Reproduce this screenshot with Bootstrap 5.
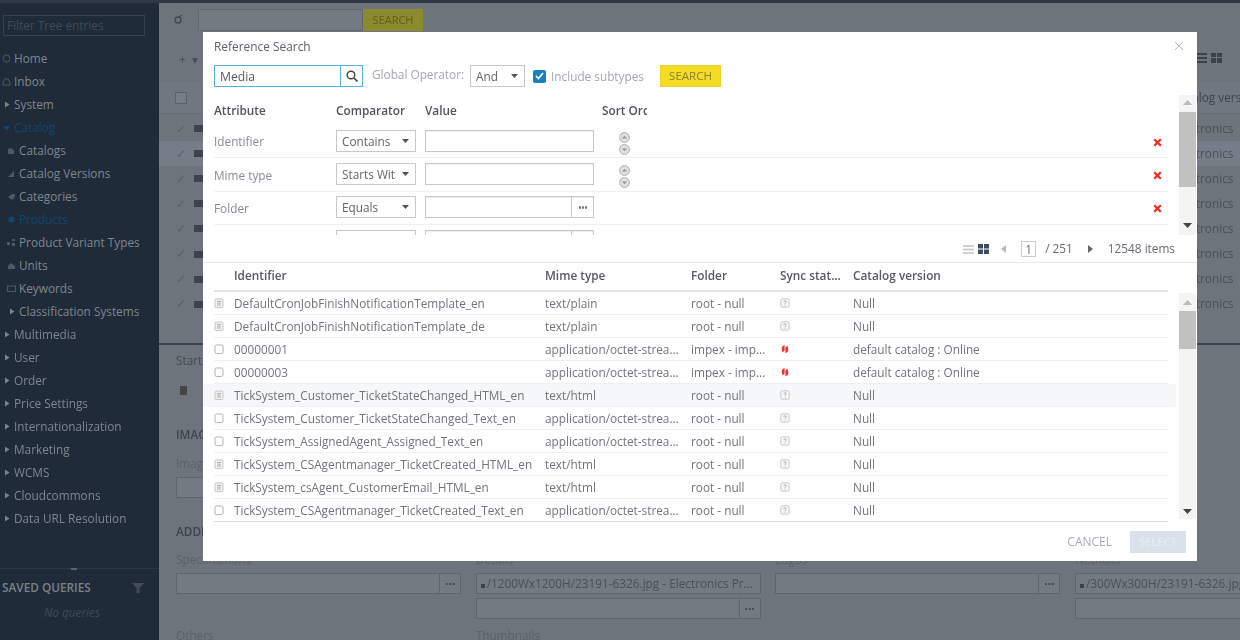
<!DOCTYPE html>
<html lang="en"><head><meta charset="utf-8"><title>Reference Search</title>
<link rel="stylesheet" href="https://cdn.jsdelivr.net/npm/bootstrap@5.3.0/dist/css/bootstrap.min.css">
<style>
html,body{height:100%;overflow:hidden}
body{font-family:"Open Sans","Liberation Sans",sans-serif;font-size:11.8px;background:#6e747c;color:#6d7278}
.shell{height:640px;width:1240px;position:relative;overflow:hidden;border-top:3px solid #2f3a46}
.dimmed{filter:blur(.7px);height:637px}
.side{width:159px;background:#1f2b38;color:#7f868e;flex:none;height:637px}
.tree-filter{margin:12px 14px 0 3px;height:21px;border:1px solid #36434f;color:#3f4b57;padding:1px 3px;font-size:11.8px;line-height:17px}
.tree{margin-top:10.500px;list-style:none;padding:0;font-size:11.8px}
.tree li{height:23px;line-height:23px;display:flex;align-items:center;white-space:nowrap;padding-left:14px;position:relative}
.tree li.kid{padding-left:19px}
.tree li.on{color:#12466f}
.tree svg{position:absolute;left:2px;top:7px;width:9px;height:9px}
.tree li.kid svg{left:7px}
.side-foot{margin-top:auto;border-top:1px solid #2a3744;height:72px;position:relative;padding:10px 2px 0}
.side-foot .grip{position:absolute;left:71px;top:-1px;width:6px;height:2px;background:#5a6570}
.sq{font-weight:600;color:#7a8189}
.nq{font-style:italic;color:#3f4b57;text-align:center;margin-top:7px;padding-right:15px}
.funnel{position:absolute;right:15px;top:14px;width:12px;height:10px}
.work{flex:1;min-width:0}
.w-top{height:37px;padding:6px 0 0 15px}
.w-in{height:22px;width:165px;background:#747a82;border:1px solid #62686f}
.w-btn{height:22px;width:60px;background:#8b8a2e;color:#5f5f18;text-align:center;line-height:22px;font-size:11px}
.tag{margin:5px 15px 0 0}
.w-tools{height:42px;padding:11px 0 0 20px;color:#4a5058}
.w-grid{margin-top:2px;padding-right:18px}
.w-head{height:32px;background:#717780;padding-left:16px;border-bottom:1px solid #666c74;color:#3f454d;white-space:nowrap}
.w-row{height:25.100px;padding-left:17px;white-space:nowrap;color:#4b5159}
.w-row.hi{background:#767d88}
.w-ver{width:66px;overflow:hidden;flex:none}
.w-box{width:12px;height:12px;border:1px solid #5b6169;background:#777d85;flex:none}
.w-tick{width:12px;color:#5b6169;flex:none}
.w-thumb{width:11px;height:7px;background:#3d434b;margin-left:6px}
.w-list{height:229px;padding-top:2px;overflow:hidden}
.w-detail{height:295px;border-top:2px solid #3a444f;padding:7px 0 0 17px;color:#454b53}
.w-line{line-height:16px}
.dash{width:7px;height:10px;margin:17px 0 17px 4px;display:block}
.fade{color:#5d636b;line-height:14px}
.strong1{font-weight:600;color:#3f454d;line-height:16px}
.gap-l{color:#5b6169;margin-top:13px;line-height:16px}
.add-h{margin-top:25px}
.spec-l{margin-top:12px}
.oth-l{margin-top:8px}
.img-f{margin-top:6px}
.fld-row{margin-top:6px}
.w-field{background:#747a82;border:1px solid #5f656d;height:21px;white-space:nowrap;overflow:hidden;line-height:19px;padding-left:4px;color:#4a5058}
.wf-w{width:285px;margin-right:14.670px;flex:none}
.wf-b{display:block;width:21px;float:right;border-left:1px solid #5f656d;height:19px;text-align:center;line-height:13px;font-weight:700;margin-left:2px;color:#444}
.dot{display:inline-block;width:4px;height:4px;background:#3d434b;margin-right:2px}
.dialog{position:absolute;left:203px;top:29px;width:994px;height:529px;background:#fff;color:#6f757b;display:flex;flex-direction:column;font-size:11.8px;overflow:hidden;filter:blur(.25px)}
.d-title{height:33px;padding:5px 11px 0;font-size:11.9px;line-height:18px;color:#5c6268;position:relative}
.d-close{position:absolute;right:13px;top:9px;width:10px;height:10px}
.d-bar{height:22px;padding-left:11px;align-items:center}
.qbox{width:149px;height:22px;border:1px solid #5bb0dc;display:flex;color:#55595e;font-size:12.2px}
.qbox span:first-child{flex:1;padding-left:5px;line-height:21px;border-right:1px solid #5bb0dc}
.qbox span:last-child{width:21px;display:flex;align-items:center;justify-content:center}
.glob{color:#a1a7ad;margin-left:9px;width:92px;white-space:nowrap;margin-top:-3px}
.d-sel.form-select{font-size:11.8px;height:22px;min-height:0;padding:0 20px 0 5px;border:1px solid #c8c8c8;border-radius:0;color:#5f6468;line-height:20px;box-shadow:none;background-size:7px 4px;background-position:right 6px center;background-image:url("data:image/svg+xml,%3Csvg xmlns='http://www.w3.org/2000/svg' viewBox='0 0 7 4'%3E%3Cpath d='M0 0h7L3.5 4z' fill='%23555'/%3E%3C/svg%3E");text-overflow:clip}
.sel-op.form-select{width:55px;margin-left:6px}
.chk{width:13px;height:13px;margin-left:8px;background:#1b7fc4;border-radius:2px;flex:none;display:flex;align-items:center;justify-content:center}
.inc{color:#a1a7ad;margin-left:5px;margin-top:2px;width:109px;white-space:nowrap}
.btn.y-btn{width:61px;height:22px;padding:0;border-radius:0;background:#f5dc25;border:1px solid #ecd32a;font-size:11.5px;color:#8b8030;line-height:20px}
.crit{height:140px;margin-top:8px;position:relative;overflow:hidden;padding-left:11px}
.crit-h{height:30px;font-weight:600;color:#50565c;align-items:center;padding-top:2px}
.c1{width:122px;flex:none}.c2{width:89px;flex:none}.c3{width:177px;flex:none}
.c4{width:45px;overflow:hidden;white-space:nowrap;flex:none}
.crit-r{height:33.300px;width:954px;border-bottom:1px solid #f0f0f0;align-items:center;color:#868c92}
.crit-r .c1{padding-top:2px}
.crit-r .c2{margin-top:-1px}
.crit-r .d-sel{width:80px}
.vbox{width:169px;height:22px;border:1px solid #c8c8c8;box-shadow:inset 0 1px 1px #eee;display:flex;justify-content:flex-end;flex:none;margin-top:-1px}
.vbox i{width:22px;border-left:1px solid #c8c8c8;display:flex;align-items:center;justify-content:center}
.sort{width:10px;margin-left:25px;margin-top:5px;flex:none}
.sort svg{display:block;width:11px;height:11px;margin-bottom:1px}
.rem{margin-left:auto;margin-right:6px;width:9px;height:9px;flex:none;margin-top:2px}
.vbar{position:absolute;right:1px;width:17px;background:#f4f4f4}
.vbar .thumbx{position:absolute;left:0;width:17px;background:#c1c1c1}
.vbar svg{position:absolute;left:4px;width:9px;height:5px}
.pager{height:28px;padding:1px 22px 0 0;color:#666c72;border-bottom:1px solid #eaeaea;justify-content:flex-end;align-items:center}
.pg-prev{margin-left:12px}
.pg-next{margin:0 15px}
.pnum{width:15px;height:16px;border:1px solid #ccc;text-align:center;line-height:14px;margin:0 9px 0 15px}
.list{position:relative;flex:1;padding-left:11px}
.tbl.table{width:954px;table-layout:fixed;margin:0;font-size:11.8px;color:#6f757b;--bs-table-bg:transparent;border-collapse:separate;border-spacing:0}
.tbl th{height:29px;padding:0 0 2px;font-weight:600;color:#555b61;border-bottom:2px solid #e4e4e4;vertical-align:middle}
.tbl td{height:23px;padding:0;vertical-align:middle;white-space:nowrap;overflow:hidden;line-height:22px;border-bottom:1px solid #f0f0f0;box-shadow:none}
.tbl tr.hl td{background:#f5f7f9}
.tbl tr.hl td:first-child{box-shadow:-11px 0 0 #f5f7f9}
.tbl tr.hl td:last-child{box-shadow:8px 0 0 #f5f7f9}
.tbl svg{display:block;width:10px;height:10px}
.tbl tbody tr:last-child td{border-bottom:1px solid #ddd}
.d-foot{height:39px;justify-content:flex-end;align-items:center;padding-right:11px}
.cancel{color:#a8adb2;font-size:12px;margin-right:18px}
.btn.sel-btn{width:56px;height:22px;padding:0;background:#d9e1eb;border:0;border-radius:0;color:#e8edf3;font-size:11.5px;opacity:1}
</style></head>
<body>
<svg width="0" height="0" class="position-absolute">
<symbol id="doc" viewBox="0 0 10 10"><rect x="1" y="1" width="8" height="8.500" rx="1" fill="#f2f2f2" stroke="#bbb" stroke-width=".8"/><path d="M3 3.500h4M3 5.200h4M3 7h4" stroke="#a0a0a0" stroke-width=".8"/></symbol>
<symbol id="blank" viewBox="0 0 10 10"><rect x="1" y="1" width="8" height="8.500" rx="1.500" fill="#fff" stroke="#aaa" stroke-width=".9"/></symbol>
<symbol id="unk" viewBox="0 0 10 10"><rect x=".8" y=".8" width="8.400" height="8.400" rx="1.500" fill="#f7f7f7" stroke="#bbb" stroke-width=".8"/><path d="M3.800 3.800c0-1.400 2.400-1.400 2.400 0 0 1-1.200 1-1.200 2M5 6.800v.8" fill="none" stroke="#999" stroke-width=".8"/></symbol>
<symbol id="red" viewBox="0 0 10 10"><path d="M4.600 1C2.200 1.500 1.300 3.500 1.800 5.600L2.600 8.500 4.600 6.500zM5.400 9C7.800 8.500 8.700 6.500 8.200 4.400L7.400 1.500 5.400 3.500z" fill="#e8342c"/></symbol>
<symbol id="tri" viewBox="0 0 9 9"><path d="M3 1.500 7.500 4.500 3 7.500z" fill="#7b838b"/></symbol>
<symbol id="tridown" viewBox="0 0 9 9"><path d="M1 3h7L4.500 7.500z" fill="#12466f"/></symbol>
<symbol id="sortu" viewBox="0 0 10 10"><circle cx="5" cy="5" r="4.500" fill="#e0e0e0" stroke="#aaa" stroke-width=".8"/><path d="M2.500 6 5 3.500 7.500 6" fill="#999"/></symbol>
<symbol id="sortd" viewBox="0 0 10 10"><circle cx="5" cy="5" r="4.500" fill="#e0e0e0" stroke="#aaa" stroke-width=".8"/><path d="M2.500 4 5 6.500 7.500 4" fill="#999"/></symbol>
<symbol id="xr" viewBox="0 0 9 9"><path d="M1.200 1.200 7.800 7.800M7.800 1.200 1.200 7.800" stroke="#ee2e24" stroke-width="2.300"/></symbol>
<symbol id="up" viewBox="0 0 9 5"><path d="M0 5 4.500 0 9 5z" fill="#bbb"/></symbol>
<symbol id="dn" viewBox="0 0 9 5"><path d="M0 0 4.500 5 9 0z" fill="#444"/></symbol>
</svg>
<div class="shell">
<div class="dimmed d-flex">
  <aside class="side d-flex flex-column">
    <div class="tree-filter">Filter Tree entries</div>
    <ul class="tree">
      <li><svg viewBox="0 0 9 9"><circle cx="4.500" cy="4.500" r="3.500" fill="none" stroke="#4f5964"/></svg>Home</li>
      <li><svg viewBox="0 0 9 9"><path d="M1 8V5l2-3h3l2 3v3z" fill="none" stroke="#4f5964"/></svg>Inbox</li>
      <li><svg><use href="#tri"/></svg>System</li>
      <li class="on"><svg><use href="#tridown"/></svg>Catalog</li>
      <li class="kid"><svg viewBox="0 0 9 9"><path d="M1 8V3l2-1 4 2v4z" fill="#4f5964"/></svg>Catalogs</li>
      <li class="kid"><svg viewBox="0 0 9 9"><path d="M1 8 7 2v6z" fill="#4f5964"/></svg>Catalog Versions</li>
      <li class="kid"><svg viewBox="0 0 9 9"><path d="M1 5 5 2h3v3L5 8z" fill="#4f5964"/></svg>Categories</li>
      <li class="kid on"><svg viewBox="0 0 9 9"><circle cx="4.500" cy="4.500" r="3" fill="#12466f"/></svg>Products</li>
      <li class="kid"><svg viewBox="0 0 9 9"><path d="M0 4h3v3H0zM5 1h3v2H5zM5 5h3v3H5z" fill="#4f5964"/></svg>Product Variant Types</li>
      <li class="kid"><svg viewBox="0 0 9 9"><path d="M1 8V5l3-3 4 3v3z" fill="#4f5964"/></svg>Units</li>
      <li class="kid"><svg viewBox="0 0 9 9"><rect x=".5" y="2" width="8" height="5.500" fill="none" stroke="#4f5964"/></svg>Keywords</li>
      <li class="kid"><svg><use href="#tri"/></svg>Classification Systems</li>
      <li><svg><use href="#tri"/></svg>Multimedia</li>
      <li><svg><use href="#tri"/></svg>User</li>
      <li><svg><use href="#tri"/></svg>Order</li>
      <li><svg><use href="#tri"/></svg>Price Settings</li>
      <li><svg><use href="#tri"/></svg>Internationalization</li>
      <li><svg><use href="#tri"/></svg>Marketing</li>
      <li><svg><use href="#tri"/></svg>WCMS</li>
      <li><svg><use href="#tri"/></svg>Cloudcommons</li>
      <li><svg><use href="#tri"/></svg>Data URL Resolution</li>
    </ul>
    <div class="side-foot"><span class="grip"></span><div class="sq">SAVED QUERIES</div><svg class="funnel" viewBox="0 0 12 10"><path d="M0 0h12L7.500 5v5h-3V5z" fill="#414c57"/></svg><div class="nq">No queries</div></div>
  </aside>
  <main class="work">
    <div class="w-top d-flex align-items-start"><svg class="tag" width="9" height="10" viewBox="0 0 9 10"><circle cx="4" cy="6" r="3" fill="none" stroke="#444b53" stroke-width="1.500"/><path d="M5 3l3-2" stroke="#444b53" stroke-width="1.500"/></svg><div class="w-in"></div><div class="w-btn">SEARCH</div></div>
    <div class="w-tools d-flex">+ &nbsp;<span>▾</span><span class="ms-auto d-flex gap-1 align-items-start w-grid"><svg width="11" height="10" viewBox="0 0 11 10"><path d="M0 1h11M0 5h11M0 9h11" stroke="#3c424a" stroke-width="2"/></svg><svg width="11" height="10" viewBox="0 0 11 10"><path d="M0 0h5v4H0zM6 0h5v4H6zM0 5h5v5H0zM6 5h5v5H6z" fill="#3c424a"/></svg></span></div>
    <div class="w-head d-flex align-items-center"><span class="w-box"></span><span class="w-ver ms-auto">Catalog version</span></div>
    <div class="w-list">
      <div class="w-row d-flex align-items-center"><span class="w-tick">✓</span><span class="w-thumb"></span><span class="w-ver ms-auto">Electronics</span></div>
      <div class="w-row hi d-flex align-items-center"><span class="w-tick">✓</span><span class="w-thumb"></span><span class="w-ver ms-auto">Electronics</span></div>
      <div class="w-row d-flex align-items-center"><span class="w-tick">✓</span><span class="w-thumb"></span><span class="w-ver ms-auto">Electronics</span></div>
      <div class="w-row d-flex align-items-center"><span class="w-tick">✓</span><span class="w-thumb"></span><span class="w-ver ms-auto">Electronics</span></div>
      <div class="w-row d-flex align-items-center"><span class="w-tick">✓</span><span class="w-thumb"></span><span class="w-ver ms-auto">Electronics</span></div>
      <div class="w-row d-flex align-items-center"><span class="w-tick">✓</span><span class="w-thumb"></span><span class="w-ver ms-auto">Electronics</span></div>
      <div class="w-row d-flex align-items-center"><span class="w-tick">✓</span><span class="w-thumb"></span><span class="w-ver ms-auto">Electronics</span></div>
      <div class="w-row d-flex align-items-center"><span class="w-tick">✓</span><span class="w-thumb"></span><span class="w-ver ms-auto">Electronics</span></div>
    </div>
    <div class="w-detail">
      <div class="w-line">Start</div>
      <svg class="dash" viewBox="0 0 7 10"><path d="M0 1h7v9H0z" fill="#444"/></svg>
      <div class="fade">PROI</div>
      <div class="strong1">IMAGES</div>
      <div class="gap-l">Images</div>
      <div class="w-field img-f wf-w"></div>
      <div class="strong1 add-h">ADDITIONAL</div>
      <div class="d-flex gap-l spec-l"><div class="wf-w">Specifications</div><div class="wf-w">Details</div><div class="wf-w">Logos</div><div class="wf-w">Netnails</div></div>
      <div class="d-flex fld-row">
        <div class="wf-w"><div class="w-field"><span class="wf-b">...</span></div></div>
        <div class="wf-w"><div class="w-field"><span class="dot"></span>/1200Wx1200H/23191-6326.jpg - Electronics Pr...</div><div class="w-field mt-1"><span class="wf-b">...</span></div></div>
        <div class="wf-w"><div class="w-field"><span class="wf-b">...</span></div></div>
        <div class="wf-w"><div class="w-field"><span class="dot"></span>/300Wx300H/23191-6326.jpg</div><div class="w-field mt-1"></div></div>
      </div>
      <div class="d-flex gap-l oth-l"><div class="wf-w">Others</div><div class="wf-w">Thumbnails</div></div>
    </div>
  </main>
</div>
<section class="dialog">
  <div class="d-title">Reference Search<svg class="d-close" viewBox="0 0 10 10"><path d="M1 1l8 8M9 1 1 9" stroke="#bbb" stroke-width="1"/></svg></div>
  <div class="d-flex d-bar">
    <div class="qbox"><span>Media</span><span><svg width="12" height="12" viewBox="0 0 12 12"><circle cx="5" cy="5" r="3.800" fill="none" stroke="#444" stroke-width="1.400"/><path d="M8 8l3.500 3.500" stroke="#444" stroke-width="1.600"/></svg></span></div>
    <span class="glob">Global Operator:</span>
    <select class="form-select d-sel sel-op"><option>And</option></select>
    <span class="chk"><svg width="9" height="8" viewBox="0 0 9 8"><path d="M1 4l2.500 2.500L8 1" fill="none" stroke="#fff" stroke-width="1.700"/></svg></span>
    <span class="inc">Include subtypes</span>
    <button class="btn y-btn" type="button">SEARCH</button>
  </div>
  <div class="crit">
    <div class="d-flex crit-h"><span class="c1">Attribute</span><span class="c2">Comparator</span><span class="c3">Value</span><span class="c4">Sort Order</span></div>
    <div class="d-flex crit-r"><span class="c1">Identifier</span><span class="c2"><select class="form-select d-sel"><option>Contains</option></select></span><span class="vbox"></span><span class="sort"><svg><use href="#sortu"/></svg><svg><use href="#sortd"/></svg></span><svg class="rem"><use href="#xr"/></svg></div>
    <div class="d-flex crit-r"><span class="c1">Mime type</span><span class="c2"><select class="form-select d-sel"><option>Starts With</option></select></span><span class="vbox"></span><span class="sort"><svg><use href="#sortu"/></svg><svg><use href="#sortd"/></svg></span><svg class="rem"><use href="#xr"/></svg></div>
    <div class="d-flex crit-r"><span class="c1">Folder</span><span class="c2"><select class="form-select d-sel"><option>Equals</option></select></span><span class="vbox"><i><svg width="8" height="3" viewBox="0 0 10 3"><path d="M0 0h2.500v3H0zM3.700 0h2.500v3H3.700zM7.500 0H10v3H7.500z" fill="#777"/></svg></i></span><svg class="rem"><use href="#xr"/></svg></div>
    <div class="d-flex crit-r border-0"><span class="c1"></span><span class="c2"><select class="form-select d-sel"><option>&nbsp;</option></select></span><span class="vbox"><i></i></span></div>
    <div class="vbar" style="top:0;height:140px"><svg style="top:5px"><use href="#up"/></svg><div class="thumbx" style="top:17px;height:75px"></div><svg style="bottom:7px"><use href="#dn"/></svg></div>
  </div>
  <div class="d-flex pager">
    <svg width="11" height="9" viewBox="0 0 11 9"><path d="M0 1h11M0 4.500h11M0 8h11" stroke="#c4c4c4" stroke-width="1.500"/></svg>
    <svg class="ms-1" width="11" height="10" viewBox="0 0 11 10"><path d="M0 0h5v4.500H0zM6 0h5v4.500H6zM0 5.500h5V10H0zM6 5.500h5V10H6z" fill="#3d4a63"/></svg>
    <svg class="pg-prev" width="5" height="8" viewBox="0 0 5 8"><path d="M5 0v8L0 4z" fill="#bbb"/></svg>
    <span class="pnum">1</span><span>/ 251</span>
    <svg class="pg-next" width="5" height="8" viewBox="0 0 5 8"><path d="M0 0v8l5-4z" fill="#666"/></svg>
    <span>12548 items</span>
  </div>
  <div class="list">
    <table class="table tbl">
      <colgroup><col style="width:20px"><col style="width:311px"><col style="width:146px"><col style="width:89px"><col style="width:73px"><col></colgroup>
      <thead><tr><th></th><th>Identifier</th><th>Mime type</th><th>Folder</th><th>Sync stat...</th><th>Catalog version</th></tr></thead>
      <tbody>
        <tr><td><svg><use href="#doc"/></svg></td><td>DefaultCronJobFinishNotificationTemplate_en</td><td>text/plain</td><td>root - null</td><td><svg><use href="#unk"/></svg></td><td>Null</td></tr>
        <tr><td><svg><use href="#doc"/></svg></td><td>DefaultCronJobFinishNotificationTemplate_de</td><td>text/plain</td><td>root - null</td><td><svg><use href="#unk"/></svg></td><td>Null</td></tr>
        <tr><td><svg><use href="#blank"/></svg></td><td>00000001</td><td>application/octet-strea...</td><td>impex - imp...</td><td><svg><use href="#red"/></svg></td><td>default catalog : Online</td></tr>
        <tr><td><svg><use href="#blank"/></svg></td><td>00000003</td><td>application/octet-strea...</td><td>impex - imp...</td><td><svg><use href="#red"/></svg></td><td>default catalog : Online</td></tr>
        <tr class="hl"><td><svg><use href="#doc"/></svg></td><td>TickSystem_Customer_TicketStateChanged_HTML_en</td><td>text/html</td><td>root - null</td><td><svg><use href="#unk"/></svg></td><td>Null</td></tr>
        <tr><td><svg><use href="#blank"/></svg></td><td>TickSystem_Customer_TicketStateChanged_Text_en</td><td>application/octet-strea...</td><td>root - null</td><td><svg><use href="#unk"/></svg></td><td>Null</td></tr>
        <tr><td><svg><use href="#blank"/></svg></td><td>TickSystem_AssignedAgent_Assigned_Text_en</td><td>application/octet-strea...</td><td>root - null</td><td><svg><use href="#unk"/></svg></td><td>Null</td></tr>
        <tr><td><svg><use href="#doc"/></svg></td><td>TickSystem_CSAgentmanager_TicketCreated_HTML_en</td><td>text/html</td><td>root - null</td><td><svg><use href="#unk"/></svg></td><td>Null</td></tr>
        <tr><td><svg><use href="#doc"/></svg></td><td>TickSystem_csAgent_CustomerEmail_HTML_en</td><td>text/html</td><td>root - null</td><td><svg><use href="#unk"/></svg></td><td>Null</td></tr>
        <tr><td><svg><use href="#blank"/></svg></td><td>TickSystem_CSAgentmanager_TicketCreated_Text_en</td><td>application/octet-strea...</td><td>root - null</td><td><svg><use href="#unk"/></svg></td><td>Null</td></tr>
      </tbody>
    </table>
    <div class="vbar" style="top:30px;height:226px"><svg style="top:7px"><use href="#up"/></svg><div class="thumbx" style="top:18px;height:38px"></div><svg style="bottom:5px"><use href="#dn"/></svg></div>
  </div>
  <div class="d-flex d-foot"><span class="cancel">CANCEL</span><button class="btn sel-btn" type="button" disabled>SELECT</button></div>
</section>
</div>
<script src="https://cdn.jsdelivr.net/npm/bootstrap@5.3.0/dist/js/bootstrap.bundle.min.js"></script>
</body></html>
